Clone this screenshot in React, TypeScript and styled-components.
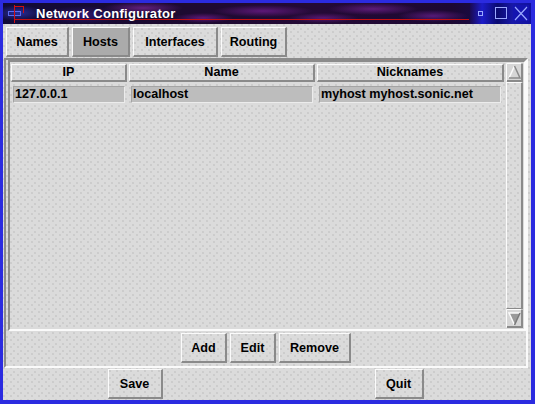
import React from 'react';
import styled, { createGlobalStyle, css } from 'styled-components';

const Global = createGlobalStyle`
  html, body { margin: 0; padding: 0; background: #2a2ad8; }
  body { font-family: "Liberation Sans", Arial, sans-serif; }
  #root { width: 535px; height: 404px; }
`;

const stipple = css`
  background-color: #dbdbdb;
  background-image:
    radial-gradient(circle at 1px 1px, #bababa 0.6px, transparent 0.8px),
    radial-gradient(circle at 1px 1px, #bababa 0.6px, transparent 0.8px);
  background-size: 7px 7px, 7px 7px;
  background-position: 0 0, 3px 4px;
`;

const Window = styled.div`
  width: 535px;
  height: 404px;
  box-sizing: border-box;
  border-style: solid;
  border-color: #2b2be0;
  border-width: 3px 4px 4px 3px;
  display: flex;
  flex-direction: column;
  box-shadow: inset 0 0 0 1px #1212a0;
`;

const TitleBar = styled.div`
  height: 21px;
  flex: none;
  display: flex;
  align-items: center;
  position: relative;
  background:
    radial-gradient(ellipse 40px 6px at 140px 5px, rgba(130, 40, 160, 0.7), transparent),
    radial-gradient(ellipse 30px 5px at 200px 15px, rgba(120, 30, 150, 0.7), transparent),
    radial-gradient(ellipse 50px 6px at 260px 8px, rgba(120, 30, 150, 0.7), transparent),
    radial-gradient(ellipse 35px 5px at 320px 15px, rgba(110, 30, 140, 0.7), transparent),
    radial-gradient(ellipse 45px 6px at 370px 6px, rgba(120, 35, 150, 0.7), transparent),
    radial-gradient(ellipse 35px 6px at 430px 13px, rgba(110, 35, 150, 0.7), transparent),
    radial-gradient(ellipse 25px 8px at 15px 10px, rgba(50, 60, 200, 0.7), transparent),
    radial-gradient(ellipse 40px 9px at 80px 12px, rgba(60, 30, 150, 0.6), transparent),
    linear-gradient(90deg, #100a38 0%, #1c0a30 30%, #240a36 60%, #1c0832 85%, #14106a 100%);
  &::after {
    content: '';
    position: absolute;
    left: 11px;
    right: 62px;
    top: 16px;
    height: 1px;
    background: #c81010;
  }
`;

const AppIcon = styled.svg`
  width: 24px;
  height: 21px;
  flex: none;
  margin-right: 9px;
`;

const TitleText = styled.span`
  color: #fff;
  font-weight: bold;
  font-size: 13px;
  line-height: 21px;
  letter-spacing: 0.3px;
  position: relative;
  z-index: 1;
  margin-top: -1px;
`;

const Controls = styled.div`
  margin-left: auto;
  width: 61px;
  height: 21px;
  display: flex;
  align-items: center;
  background: linear-gradient(90deg, #1a0a50 0%, #1c1cc8 20%, #0a0a70 45%, #1818a8 70%, #1010a0 100%);
`;

const ControlIcon = styled.svg`
  display: block;
  flex: none;
`;

const Body = styled.div`
  ${stipple};
  flex: 1;
  display: flex;
  flex-direction: column;
  min-height: 0;
`;

const TabRow = styled.div`
  display: flex;
  gap: 3px;
  padding: 3px 0 0 3px;
  height: 33px;
  box-sizing: border-box;
  flex: none;
`;

const Btn = styled.button<{ $w: number; $pressed?: boolean; $h?: number }>`
  ${stipple};
  ${(p) => p.$pressed && css`background-color: #ababab; background-image: none;`}
  width: ${(p) => p.$w}px;
  height: ${(p) => p.$h ?? 30}px;
  box-sizing: border-box;
  padding: 0;
  margin: 0;
  border-style: solid;
  border-width: 1px 2px 2px 1px;
  border-color: #fbfbfb #8a8a8a #8a8a8a #fbfbfb;
  font-family: "Liberation Sans", Arial, sans-serif;
  font-weight: bold;
  font-size: 12.6px;
  color: #000;
  text-align: center;
  cursor: default;
`;

const Panel = styled.div`
  margin: 1px 3px 0 1px;
  height: 310px;
  box-sizing: border-box;
  border-style: solid;
  border-width: 2px;
  border-color: #8c8c8c #fafafa #fafafa #8c8c8c;
  display: flex;
  flex-direction: column;
  padding: 0 0 0 2px;
  flex: none;
`;

const TableFrame = styled.div`
  width: 518px;
  height: 271px;
  box-sizing: border-box;
  border-style: solid;
  border-width: 2px;
  border-color: #8c8c8c #fafafa #fafafa #8c8c8c;
  display: flex;
  padding: 1px;
`;

const List = styled.div`
  flex: 1;
  display: flex;
  flex-direction: column;
  padding: 1px 0 0 0;
`;

const Cols = styled.div`
  display: grid;
  grid-template-columns: 116px 186px 187px;
  column-gap: 2px;
`;

const HeaderCell = styled.div`
  height: 18px;
  box-sizing: border-box;
  border-style: solid;
  border-width: 1px 2px 2px 1px;
  border-color: #fbfbfb #8a8a8a #8a8a8a #fbfbfb;
  font-weight: bold;
  font-size: 12.6px;
  line-height: 15px;
  text-align: center;
  color: #000;
`;

const DataRow = styled(Cols)`
  margin-top: 4px;
`;

const DataCell = styled.div<{ $r?: number }>`
  margin: 0 ${(p) => p.$r ?? 2}px 0 2px;
  height: 17px;
  box-sizing: border-box;
  background: #bdbdbd;
  border: 1px solid;
  border-color: #a4a4a4 #ececec #ececec #a4a4a4;
  font-weight: bold;
  font-size: 12.6px;
  line-height: 15px;
  padding-left: 1px;
  color: #000;
  white-space: nowrap;
  overflow: hidden;
`;

const ScrollBar = styled.div`
  width: 17px;
  flex: none;
  margin-left: 2px;
  display: flex;
  flex-direction: column;
  background: #c4c4c4;
`;

const Arrow = styled.svg`
  display: block;
  flex: none;
`;

const Thumb = styled.div`
  ${stipple};
  flex: 1;
  box-sizing: border-box;
  border-style: solid;
  border-width: 1px 2px 1px 1px;
  border-color: #fbfbfb #8a8a8a #8a8a8a #fbfbfb;
`;

const ActionRow = styled.div`
  display: flex;
  justify-content: center;
  gap: 3px;
  padding: 2px 0 0 0;
  margin-left: -2px;
`;

const FooterRow = styled.div`
  display: grid;
  grid-template-columns: 1fr 1fr;
  justify-items: center;
  padding-top: 1px;
`;

export default function App() {
  return (
    <>
      <Global />
      <Window>
        <TitleBar>
          <AppIcon viewBox="0 0 24 21">
            <rect x="5.5" y="8.5" width="12" height="4" fill="none" stroke="#5a6af0" strokeWidth="1" />
            <line x1="11.5" y1="2" x2="11.5" y2="20" stroke="#d01010" strokeWidth="1" />
            <line x1="11" y1="3.5" x2="21" y2="3.5" stroke="#d01010" strokeWidth="1" />
            <line x1="20.5" y1="3" x2="20.5" y2="10" stroke="#d01010" strokeWidth="1" />
          </AppIcon>
          <TitleText>Network Configurator</TitleText>
          <Controls>
            <ControlIcon width="18" height="21" viewBox="0 0 18 21" style={{ marginLeft: 4 }}>
              <rect x="4.5" y="8.5" width="4" height="4" fill="none" stroke="#9aa8ff" />
            </ControlIcon>
            <ControlIcon width="20" height="21" viewBox="0 0 20 21">
              <rect x="3.5" y="4.5" width="11" height="11" fill="none" stroke="#9aa8ff" />
            </ControlIcon>
            <ControlIcon width="19" height="21" viewBox="0 0 19 21">
              <rect x="1" y="2" width="16" height="16" fill="#1414b0" />
              <path d="M3 4 L15 17 M15 4 L3 17" stroke="#9aa8ff" strokeWidth="1.2" fill="none" />
            </ControlIcon>
          </Controls>
        </TitleBar>
        <Body>
          <TabRow>
            <Btn $w={63}>Names</Btn>
            <Btn $w={58} $pressed>Hosts</Btn>
            <Btn $w={85}>Interfaces</Btn>
            <Btn $w={66}>Routing</Btn>
          </TabRow>
          <Panel>
            <TableFrame>
              <List>
                <Cols>
                  <HeaderCell>IP</HeaderCell>
                  <HeaderCell>Name</HeaderCell>
                  <HeaderCell>Nicknames</HeaderCell>
                </Cols>
                <DataRow>
                  <DataCell>127.0.0.1</DataCell>
                  <DataCell>localhost</DataCell>
                  <DataCell $r={3}>myhost myhost.sonic.net</DataCell>
                </DataRow>
              </List>
              <ScrollBar>
                <Arrow width="17" height="19" viewBox="0 0 17 19">
                  <rect x="0" y="0" width="17" height="19" fill="#d6d6d6" />
                  <path d="M0.5 18.5 V0.5 H16.5" stroke="#fbfbfb" fill="none" />
                  <path d="M16 0.5 V18 H1" stroke="#8a8a8a" strokeWidth="2" fill="none" />
                  <polygon points="8.5,3 14,15 3,15" fill="#d6d6d6" />
                  <path d="M3 15 L8.5 3" stroke="#fbfbfb" strokeWidth="1.5" fill="none" />
                  <path d="M8.5 3 L14 15 L3 15" stroke="#8a8a8a" strokeWidth="1.5" fill="none" />
                </Arrow>
                <Thumb />
                <Arrow width="17" height="19" viewBox="0 0 17 19">
                  <rect x="0" y="0" width="17" height="19" fill="#d6d6d6" />
                  <path d="M0.5 18.5 V0.5 H16.5" stroke="#fbfbfb" fill="none" />
                  <path d="M16 0.5 V18 H1" stroke="#8a8a8a" strokeWidth="2" fill="none" />
                  <polygon points="3,4 14,4 8.5,16" fill="#9a9a9a" />
                  <path d="M14 4 H3 L8.5 16" stroke="#fbfbfb" strokeWidth="1.5" fill="none" />
                  <path d="M8.5 16 L14 4" stroke="#7a7a7a" strokeWidth="1.5" fill="none" />
                </Arrow>
              </ScrollBar>
            </TableFrame>
            <ActionRow>
              <Btn $w={46}>Add</Btn>
              <Btn $w={46}>Edit</Btn>
              <Btn $w={72}>Remove</Btn>
            </ActionRow>
          </Panel>
          <FooterRow>
            <Btn $w={55} $h={30}>Save</Btn>
            <Btn $w={49} $h={30}>Quit</Btn>
          </FooterRow>
        </Body>
      </Window>
    </>
  );
}
